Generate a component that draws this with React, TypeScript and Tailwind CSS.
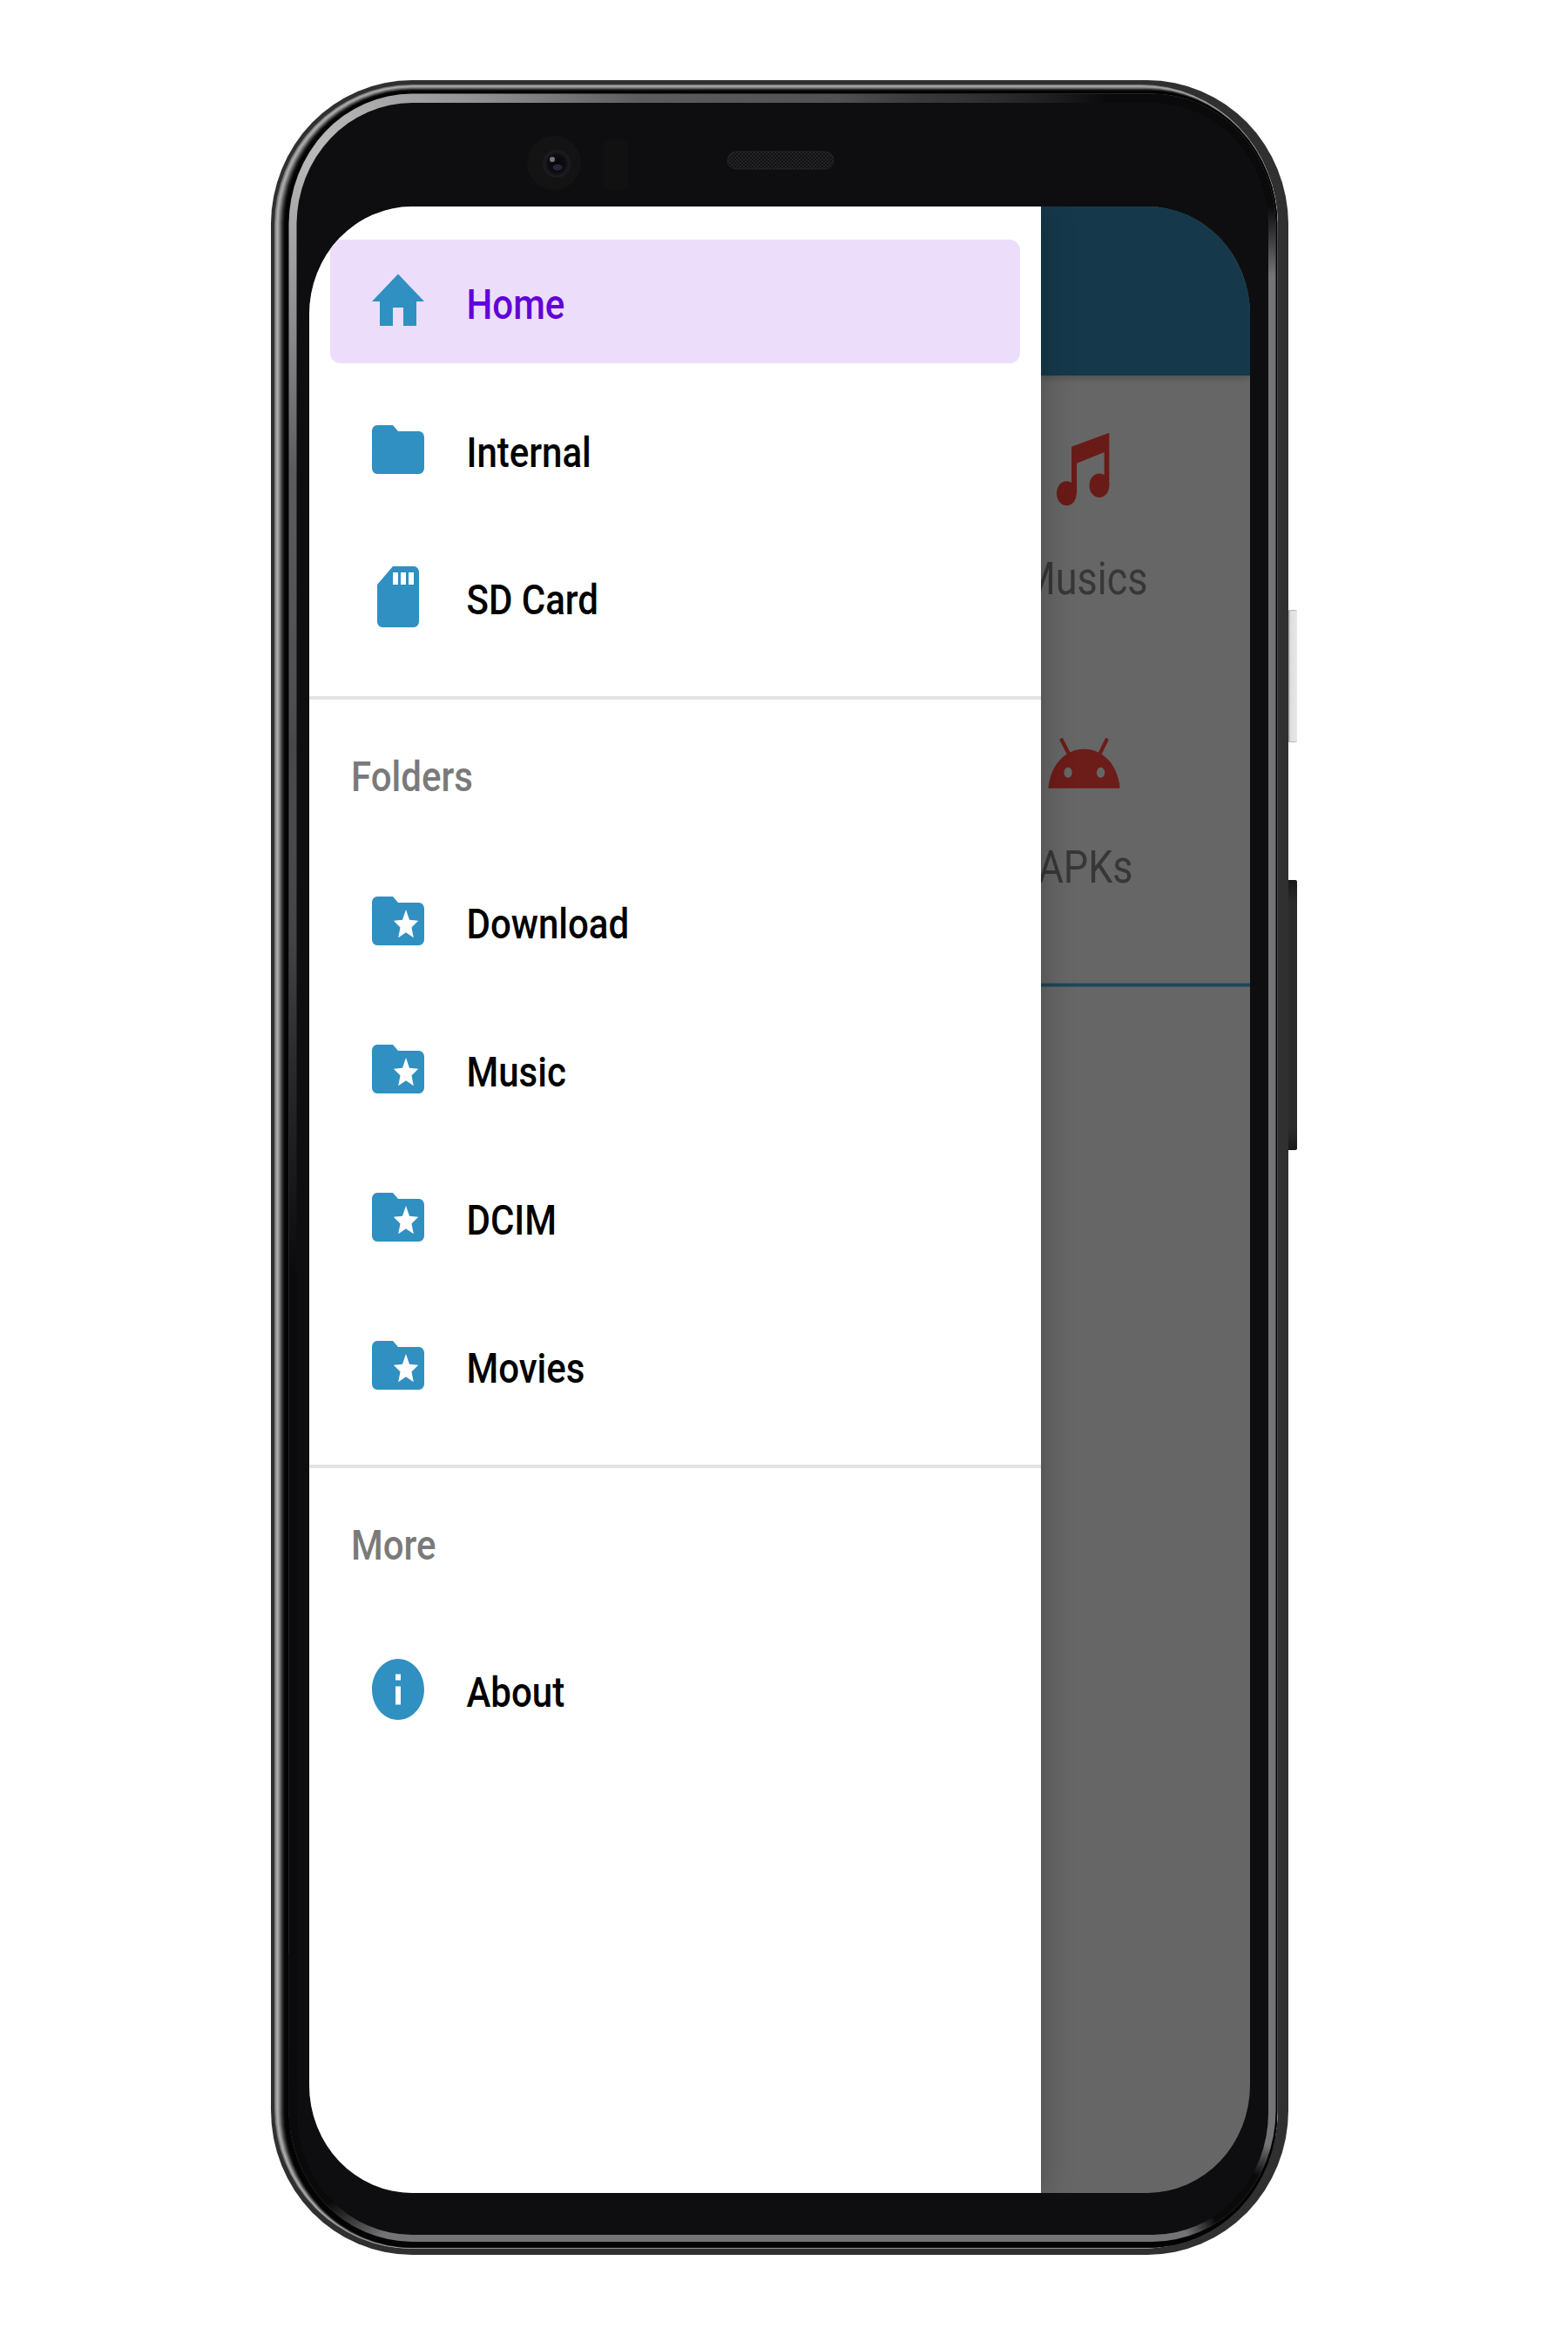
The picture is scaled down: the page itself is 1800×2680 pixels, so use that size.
import type { ReactNode } from "react";

const FOLDER = "M10 4H4c-1.1 0-1.99.9-1.99 2L2 18c0 1.1.9 2 2 2h16c1.1 0 2-.9 2-2V8c0-1.1-.9-2-2-2h-8l-2-2z";

const ICONS = {
  home: "M10 20v-6h4v6h5v-8h3L12 3 2 12h3v8z",
  folder: FOLDER,
  sd: "M18 2h-8L4.02 8 4 20c0 1.1.9 2 2 2h12c1.1 0 2-.9 2-2V4c0-1.1-.9-2-2-2zm-6 6h-2V4h2v4zm3 0h-2V4h2v4zm3 0h-2V4h2v4z",
  special:
    FOLDER +
    "M17.94 17.5L15 15.78 12.06 17.5l.78-3.33-2.59-2.24 3.41-.29L15 8.3l1.34 3.34 3.41.29-2.59 2.24.78 3.33z",
  info: "M12 2C6.48 2 2 6.48 2 12s4.48 10 10 10 10-4.48 10-10S17.52 2 12 2zm1 15h-2v-6h2v6zm0-8h-2V7h2v2z",
};

type IconName = keyof typeof ICONS;

function NavItem({ icon, label, active = false }: { icon: IconName; label: string; active?: boolean }) {
  return (
    <a
      className={
        active
          ? "mx-6 flex h-[142px] items-center gap-[42.5px] rounded-[12px] bg-[#ecdefb] pl-[42px] text-[#6002d8]"
          : "mx-6 flex h-[142px] items-center gap-[42.5px] pl-[42px] text-black"
      }
    >
      <svg viewBox="0 0 24 24" preserveAspectRatio="none" className="h-[84px] w-[72px] shrink-0" fill="#2f90c1" fillRule="evenodd">
        <path d={ICONS[icon]} />
      </svg>
      <span className="translate-y-[4px] scale-y-[1.163] text-[42px] leading-none font-medium">{label}</span>
    </a>
  );
}

function SectionTitle({ children }: { children: ReactNode }) {
  return (
    <div className="mb-[14px] flex h-[169px] items-center pl-12">
      <span className="translate-y-[3.5px] scale-y-[1.163] text-[42px] leading-none font-medium text-[#7a7a7a]">{children}</span>
    </div>
  );
}

/* Shades of the polished rim, from the outer edge inwards. */
const RIM = ["#777777", "#8c8c8c", "#adadad", "#a6a6a6", "#909090", "#747474", "#585858", "#3c3c3c", "#242424", "#121212", "#050505"];

function Layer({ l, t, r, b, fill }: { l: number; t: number; r: number; b: number; fill: string }) {
  return <rect x={l} y={t} width={r - l} height={b - t} rx={162 - l} ry={166 - t} fill={fill} />;
}

function PhoneBody() {
  return (
    <svg viewBox="0 0 1178 2496" className="absolute top-0 left-0 h-[2496px] w-[1178px]">
      <defs>
        <radialGradient id="gloss" gradientUnits="userSpaceOnUse" cx="70" cy="90" r="900">
          <stop offset="0" stopColor="#bdbdbd" />
          <stop offset="0.2" stopColor="#919191" />
          <stop offset="0.4" stopColor="#5c5c5c" />
          <stop offset="0.75" stopColor="#4c4c4c" />
          <stop offset="1" stopColor="#747476" />
        </radialGradient>
        <linearGradient id="fadeDown" x1="0" y1="0" x2="0" y2="1">
          <stop offset="0" stopColor="#0a0a0b" stopOpacity="0" />
          <stop offset="0.25" stopColor="#0a0a0b" stopOpacity="0.7" />
          <stop offset="0.4" stopColor="#0a0a0b" />
        </linearGradient>
        <linearGradient id="fadeUp" x1="0" y1="0" x2="0" y2="1">
          <stop offset="0" stopColor="#0a0a0b" />
          <stop offset="1" stopColor="#0a0a0b" stopOpacity="0" />
        </linearGradient>
        <linearGradient id="fadeRight" x1="0" y1="0" x2="1" y2="0">
          <stop offset="0" stopColor="#0a0a0b" stopOpacity="0" />
          <stop offset="1" stopColor="#0a0a0b" />
        </linearGradient>
        <radialGradient id="corner">
          <stop offset="0.5" stopColor="#0a0a0b" />
          <stop offset="1" stopColor="#0a0a0b" stopOpacity="0" />
        </radialGradient>
        <linearGradient id="powerKey" x1="0" y1="0" x2="1" y2="0">
          <stop offset="0" stopColor="#9a9a9a" />
          <stop offset="0.25" stopColor="#dedede" />
          <stop offset="1" stopColor="#e8e8e8" />
        </linearGradient>
        <linearGradient id="volumeKey" x1="0" y1="0" x2="0" y2="1">
          <stop offset="0" stopColor="#191919" />
          <stop offset="0.08" stopColor="#2b2b2b" />
          <stop offset="0.92" stopColor="#2b2b2b" />
          <stop offset="1" stopColor="#191919" />
        </linearGradient>
        <radialGradient id="lens">
          <stop offset="0" stopColor="#07070a" />
          <stop offset="0.6" stopColor="#0d0d12" />
          <stop offset="0.85" stopColor="#1c1c23" />
          <stop offset="1" stopColor="#131314" />
        </radialGradient>
        <pattern id="mesh" width="4" height="4" patternUnits="userSpaceOnUse">
          <rect width="4" height="4" fill="#111111" />
          <rect width="2" height="2" fill="#242424" />
          <rect x="2" y="2" width="2" height="2" fill="#242424" />
        </pattern>
        <clipPath id="innerRim">
          <Layer l={20.5} t={15.5} r={1153.5} b={2481} fill="black" />
        </clipPath>
      </defs>

      <rect x="1165" y="608" width="13" height="152" rx="2" fill="#b5b5b5" />
      <rect x="1168" y="609" width="10" height="150" rx="1" fill="url(#powerKey)" />
      <rect x="1165" y="918" width="13" height="310" rx="2" fill="url(#volumeKey)" />

      <Layer l={0} t={0} r={1168} b={2496} fill="#303030" />
      {RIM.map((shade, i) => (
        <Layer key={i} l={4 + i * 1.15} t={5 + i * 0.7} r={1156 - i * 0.1} b={2489 - i * 0.15} fill={shade} />
      ))}
      <Layer l={17} t={13} r={1155} b={2487} fill="#030303" />
      <g clipPath="url(#innerRim)">
        <rect width="1168" height="2496" fill="url(#gloss)" />
        <rect x="19" y="720" width="16" height="1640" fill="url(#fadeDown)" />
        <circle cx="45" cy="2375" r="130" fill="url(#corner)" />
        <rect x="0" y="2150" width="30" height="200" fill="#0a0a0b" />
        <rect x="650" y="14" width="310" height="14" fill="url(#fadeRight)" />
        <rect x="959" y="14" width="208" height="131" fill="#0a0a0b" />
        <rect x="1110" y="144" width="50" height="80" fill="url(#fadeUp)" />
        <circle cx="1118" cy="2440" r="75" fill="url(#corner)" />
      </g>
      <Layer l={29.5} t={26} r={1145} b={2473} fill="#0e0e10" />

      <circle cx="325" cy="95" r="31" fill="#131313" />
      <circle cx="328" cy="96" r="17" fill="url(#lens)" />
      <circle cx="323" cy="91" r="3" fill="#77777a" />
      <ellipse cx="329" cy="100" rx="5.500" ry="3.500" fill="#26273c" />
      <rect x="382" y="68" width="28" height="58" rx="6" fill="#111111" />
      <rect x="524" y="82" width="122" height="20" rx="10" fill="url(#mesh)" stroke="#242426" />
    </svg>
  );
}

function MusicIcon() {
  return (
    <svg viewBox="187 288 182 254" preserveAspectRatio="none" className="mt-[65px] mr-[4px] h-[85px] w-[61px]" fill="#681b17">
      <path d="M238 338L367 290V471H350V357L256 395V498H238z" />
      <ellipse cx="221" cy="498" rx="34" ry="42" />
      <ellipse cx="333" cy="471" rx="34" ry="41" />
    </svg>
  );
}

function AndroidIcon() {
  return (
    <svg viewBox="69 80 248 174" preserveAspectRatio="none" className="mt-[153px] mr-[2px] h-[58px] w-[83px]" fill="#6c1c19">
      <path d="M70 253C78 170 130 118 193 118S308 170 316 253z" />
      <path d="M116 87L139 132M270 87L248 132" stroke="#6c1c19" strokeWidth="13" strokeLinecap="round" />
      <ellipse cx="138" cy="199" rx="14" ry="18" fill="#666666" />
      <ellipse cx="250" cy="199" rx="14" ry="18" fill="#666666" />
    </svg>
  );
}

export default function App() {
  return (
    <div className="h-[2680px] w-[1800px] overflow-hidden bg-white pt-[92px] pl-[311px] font-['Roboto',sans-serif]">
      <div className="relative h-[2496px] w-[1168px] px-11 pt-[145px] pb-[71px]">
        <PhoneBody />
        <div className="relative flex h-full w-full overflow-hidden rounded-[118px/124px] bg-[#666666]">
          <nav className="relative z-10 flex h-full w-[840px] shrink-0 flex-col bg-white pt-[38px] shadow-[0_0_34px_rgba(0,0,0,0.28)]">
            <div className="flex flex-col gap-[27.5px]">
              <NavItem icon="home" label="Home" active />
              <NavItem icon="folder" label="Internal" />
              <NavItem icon="sd" label="SD Card" />
            </div>
            <div className="mt-[43px] h-1 bg-[#e3e3e3]" />
            <SectionTitle>Folders</SectionTitle>
            <div className="flex flex-col gap-7">
              <NavItem icon="special" label="Download" />
              <NavItem icon="special" label="Music" />
              <NavItem icon="special" label="DCIM" />
              <NavItem icon="special" label="Movies" />
            </div>
            <div className="mt-[43px] h-1 bg-[#e3e3e3]" />
            <SectionTitle>More</SectionTitle>
            <NavItem icon="info" label="About" />
          </nav>

          <main className="flex min-w-0 flex-1 flex-col">
            <div className="h-[194px] shrink-0 bg-[#15394b] shadow-[0_2px_8px_rgba(0,0,0,0.25)]" />
            <div className="-ml-[130px] flex w-[360px] flex-col items-center text-[45px] leading-[60px] text-[#373737]">
              <MusicIcon />
              <span className="mt-[53px] translate-y-px scale-y-[1.163]">Musics</span>
              <AndroidIcon />
              <span className="mt-[60px] translate-x-px translate-y-px scale-y-[1.163]">APKs</span>
            </div>
            <div className="mt-[103px] h-[5px] shrink-0 border-y border-[#3f5864] bg-[#204558]" />
          </main>
        </div>
      </div>
    </div>
  );
}
